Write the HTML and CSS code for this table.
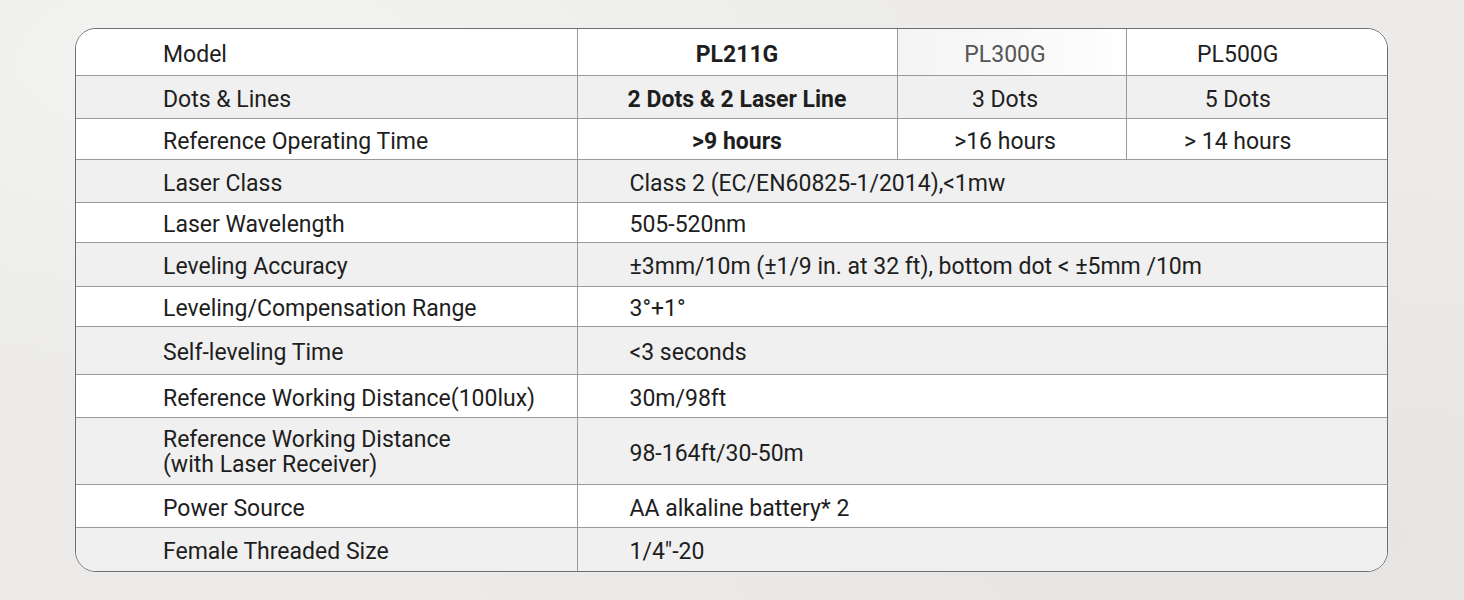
FILE: index.html
```html
<!DOCTYPE html>
<html lang="en">
<head>
<meta charset="utf-8">
<title>Specifications</title>
<link rel="stylesheet" href="styles.css">
</head>
<body>
<div class="page">
  <div class="spec">
    <table>
      <colgroup>
        <col class="c1"><col class="c2"><col class="c3"><col class="c4">
      </colgroup>
      <tr class="r1 white">
        <td class="label">Model</td>
        <td class="center bold">PL211G</td>
        <td class="center m3 muted shade">PL300G</td>
        <td class="center m4">PL500G</td>
      </tr>
      <tr class="r2 gray">
        <td class="label">Dots &amp; Lines</td>
        <td class="center bold">2 Dots &amp; 2 Laser Line</td>
        <td class="center m3">3 Dots</td>
        <td class="center m4">5 Dots</td>
      </tr>
      <tr class="r3 white">
        <td class="label">Reference Operating Time</td>
        <td class="center bold">&gt;9 hours</td>
        <td class="center m3">&gt;16 hours</td>
        <td class="center m4">&gt; 14 hours</td>
      </tr>
      <tr class="r4 gray">
        <td class="label">Laser Class</td>
        <td class="value" colspan="3">Class 2 (EC/EN60825-1/2014),&lt;1mw</td>
      </tr>
      <tr class="r5 white">
        <td class="label">Laser Wavelength</td>
        <td class="value" colspan="3">505-520nm</td>
      </tr>
      <tr class="r6 gray">
        <td class="label">Leveling Accuracy</td>
        <td class="value" colspan="3">±3mm/10m (±1/9 in. at 32 ft), bottom dot &lt; ±5mm /10m</td>
      </tr>
      <tr class="r7 white">
        <td class="label">Leveling/Compensation Range</td>
        <td class="value" colspan="3">3°+1°</td>
      </tr>
      <tr class="r8 gray">
        <td class="label">Self-leveling Time</td>
        <td class="value" colspan="3">&lt;3 seconds</td>
      </tr>
      <tr class="r9 white">
        <td class="label">Reference Working Distance(100lux)</td>
        <td class="value" colspan="3">30m/98ft</td>
      </tr>
      <tr class="r10 gray">
        <td class="label two">Reference Working Distance<br>(with Laser Receiver)</td>
        <td class="value" colspan="3">98-164ft/30-50m</td>
      </tr>
      <tr class="r11 white">
        <td class="label">Power Source</td>
        <td class="value" colspan="3">AA alkaline battery* 2</td>
      </tr>
      <tr class="r12 gray">
        <td class="label">Female Threaded Size</td>
        <td class="value" colspan="3">1/4"-20</td>
      </tr>
    </table>
  </div>
</div>
</body>
</html>
```

FILE: styles.css
```css
html, body {
  margin: 0;
  padding: 0;
}
body {
  width: 1464px;
  height: 600px;
  overflow: hidden;
  background:
    radial-gradient(ellipse at 15% 10%, #f3f3f2 0%, rgba(243,243,242,0) 45%),
    radial-gradient(ellipse at 90% 90%, #e6e5e3 0%, rgba(230,229,227,0) 50%),
    #ecebe9;
  font-family: Roboto, "Liberation Sans", Arial, sans-serif;
  color: #1e1e1e;
}
.page {
  padding: 28px 0 0 75px;
}
.spec {
  width: 1311px;
  border: 1.5px solid #6e6e6e;
  border-radius: 21px;
  overflow: hidden;
  background: #fff;
}
table {
  width: 100%;
  border-collapse: collapse;
  table-layout: fixed;
}
col.c1 { width: 501px; }
col.c2 { width: 320px; }
col.c3 { width: 229px; }
col.c4 { width: auto; }
td {
  font-size: 23px;
  line-height: 24px;
  padding: 0;
  border-bottom: 1.5px solid #9a9a9a;
  border-left: 1px solid #9a9a9a;
  vertical-align: middle;
  padding-top: 6px;
}
td:first-child { border-left: none; }
tr:last-child td { border-bottom: none; }
tr.white { background: #ffffff; }
tr.gray { background: #f0f0f0; }
.label { padding-left: 87px; }
.label.two { line-height: 25px; padding-top: 3px; }
.value { padding-left: 52px; }
.center { text-align: center; }
.m3 { padding-right: 13px; }
.m4 { padding-right: 38px; }
.bold { font-weight: 700; }
.muted { color: #555; }
.shade { background: linear-gradient(90deg, #f4f4f4 0%, #fbfbfb 80%, #ffffff 100%); }
tr.r1 { height: 46px; }
tr.r2 { height: 43px; }
tr.r3 { height: 41px; }
tr.r4 { height: 43px; }
tr.r5 { height: 40px; }
tr.r6 { height: 44px; }
tr.r7 { height: 40px; }
tr.r8 { height: 48px; }
tr.r9 { height: 43px; }
tr.r10 { height: 67px; }
tr.r11 { height: 43px; }
tr.r12 { height: 44px; }
```
